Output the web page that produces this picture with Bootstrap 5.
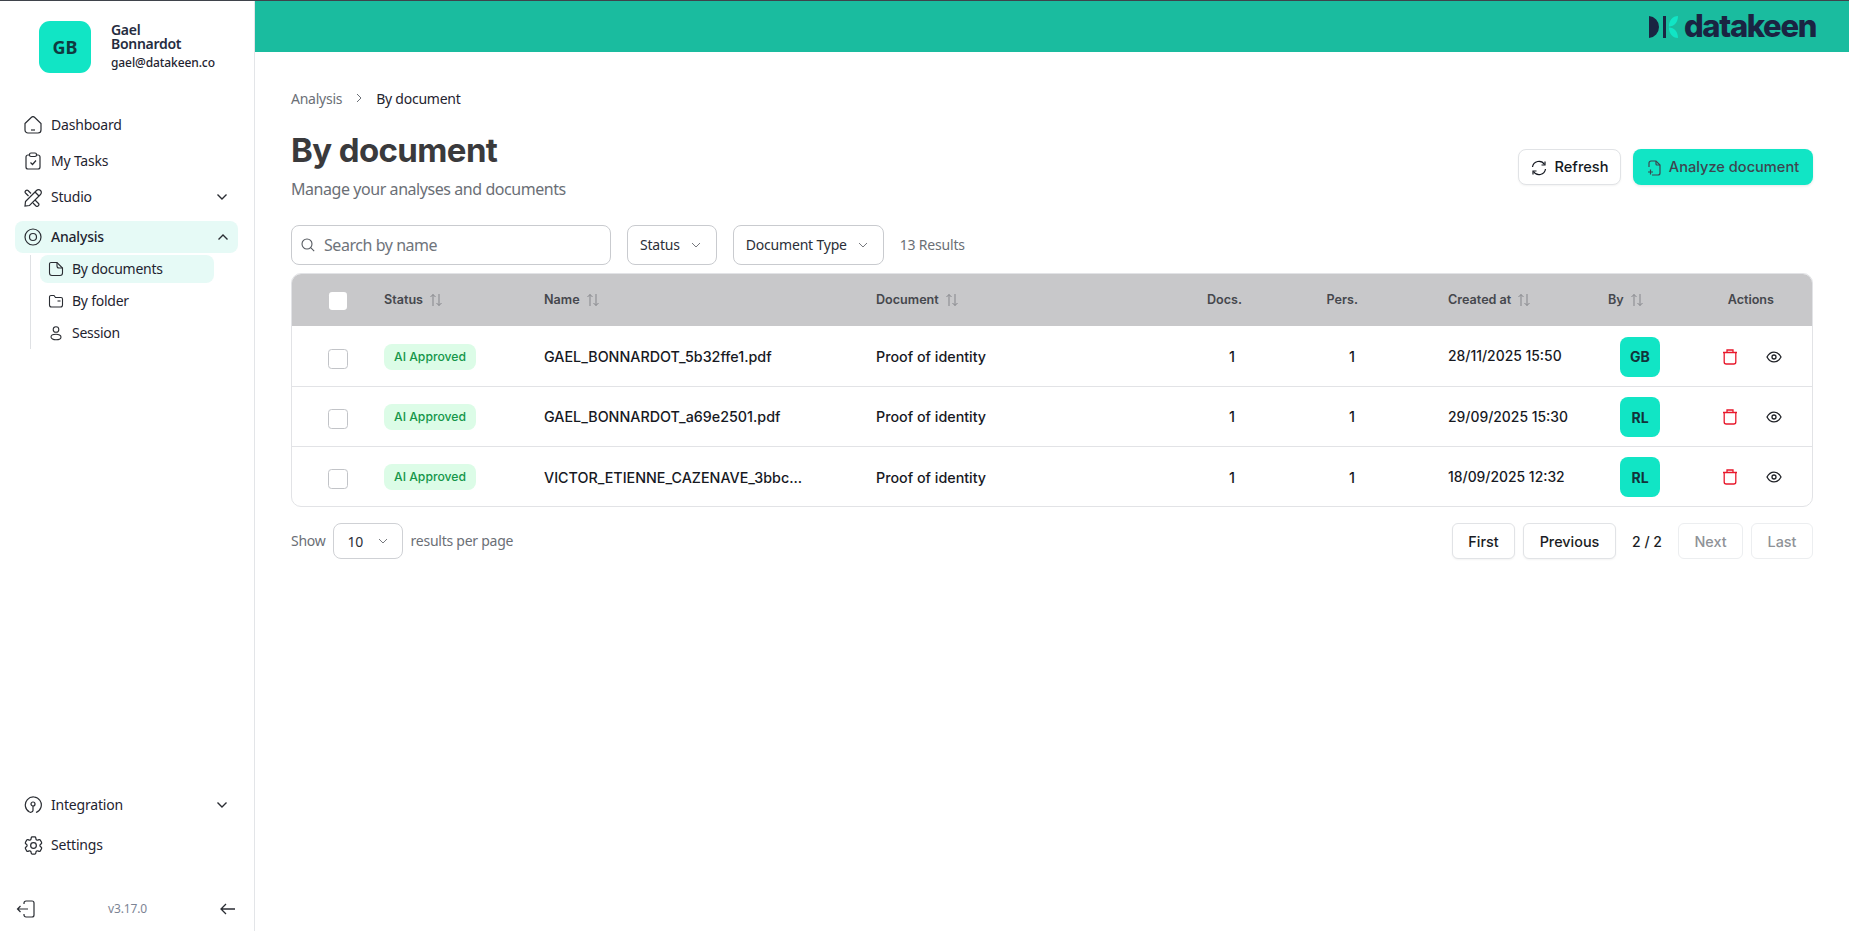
<!DOCTYPE html>
<html lang="en">
<head>
<meta charset="utf-8">
<title>By document</title>
<link rel="stylesheet" href="https://cdn.jsdelivr.net/npm/bootstrap@5.3.0/dist/css/bootstrap.min.css">
<style>
:root{--mint:#11e5c5;--ink:#1d2433;}
html,body{height:100%;overflow:hidden;}
body{border-top:1px solid #3f434b;background:#fff;font-family:"Noto Sans","Liberation Sans",sans-serif;font-size:14px;color:#1f2430;}
.shell{height:930px;}
.side{width:255px;flex:none;border-right:1px solid #e3e5e8;}
.who{padding:20px 0 0 39px;height:106px;}
.ava{width:52px;height:52px;border-radius:11px;background:var(--mint);color:#0f3a40;font-weight:700;font-size:18px;}
.who-txt{margin:-2px 0 0 20px;padding-top:4px;}
.who-name{font-weight:600;font-size:14px;line-height:14px;color:#252c40;letter-spacing:-.3px;}
.who-mail{font-size:12px;font-weight:500;line-height:14px;margin-top:5px;letter-spacing:-.1px;}
.menu-row{height:36px;padding:0 26px 0 24px;margin:0;gap:9px;font-size:14px;letter-spacing:-.2px;color:#1f2430;text-decoration:none;}
.menu-row svg.ico{flex:none;}
.menu-row svg.ico-w{margin-right:-1px;}
.menu-row .chev{margin-left:auto;}
.lbl{margin-top:-2px;}
.menu-on{height:32px;margin:6px 16px 0 15px;padding:0 9px;background:#e6faf6;border-radius:8px;font-weight:500;}
.sublist{margin:2px 0 0 30px;border-left:1px solid #dfe1e4;padding:0 0 0 9px;height:94px;width:185px;}
.sub-row{height:28px;padding:0 0 0 8px;margin-bottom:4px;gap:8px;font-size:14px;letter-spacing:-.25px;color:#1f2430;border-radius:8px;}
.sub-on{background:#e6faf6;width:174px;}
.foot{height:44px;padding:0 18px 0 16px;margin-top:24px;}
.ver{font-size:12px;color:#7c8494;letter-spacing:-.15px;}
.top{height:51px;background:#1abc9f;padding-right:33px;}
.brand{font-family:Inter,sans-serif;font-weight:800;font-size:31px;line-height:1;color:#1a2442;letter-spacing:-1.35px;margin-left:6px;margin-top:-3px;}
.pane{padding:0 36px;}
.crumbs{margin:37px 0 0;height:18px;align-items:center;font-size:14px;letter-spacing:-.25px;}
.crumbs .was{color:#6b6f76;}
.crumbs .now{color:#1f2430;}
.crumbs .sep{margin:0 14px 0 14px;}
.ttl{font-family:Inter,sans-serif;font-weight:700;font-size:33px;line-height:40px;color:#3a3a3c;letter-spacing:-.6px;margin:0;}
.subttl{font-size:16px;line-height:22px;color:#6b6f76;margin:8px 0 0;letter-spacing:-.44px;}
.heading{margin-top:23px;}
.act{height:36px;border-radius:8px;font-family:Inter,sans-serif;font-size:14.6px;font-weight:500;padding:1px 0 0;gap:8px;}
.act-ref{width:103px;background:#fff;border:1px solid #e1e3e6;color:#141821;box-shadow:0 1px 2px rgba(0,0,0,.05);}
.act-ana{width:180px;background:var(--mint);border:0;color:#3e4550;box-shadow:0 1px 3px rgba(0,0,0,.1);}
.act-ana:hover{background:var(--mint);color:#3e4550;}
.tools{margin-top:25px;height:40px;gap:16px;}
.finder{width:320px;height:40px;border:1px solid #c9cbcf;border-radius:8px;padding-left:9px;gap:9px;}
.finder input{border:0;outline:0;padding:0;font-size:16px;letter-spacing:-.45px;box-shadow:none;color:#333;}
.finder input::placeholder{color:#6f747b;opacity:1;}
.pick{height:40px;border:1px solid #c9cbcf;border-radius:8px;background:#fff;padding:0 15px 0 12px;gap:11px;font-size:14px;letter-spacing:-.2px;color:#2b2f38;}
.count{color:#6b6f76;font-size:14px;letter-spacing:-.2px;}
.tbl-wrap{margin-top:8px;width:1522px;border:1px solid #e2e3e6;border-radius:10px;overflow:hidden;}
.grid-t{table-layout:fixed;width:1520px;margin:0;font-family:Inter,sans-serif;}
.grid-t th{height:52px;background:#c8c8ca;color:#45474d;font-size:12.6px;font-weight:600;border:0;padding:0 0 0 12px;vertical-align:middle;}
.grid-t td{height:60px;padding:2px 0 0 12px;font-size:14.3px;font-weight:500;color:#17191f;border-bottom:1px solid #e2e3e6;vertical-align:middle;white-space:nowrap;}
.grid-t tr:last-child td{border-bottom:0;}
.grid-t .sort{margin-left:6px;vertical-align:-3px;}
.grid-t td.stamp{font-size:13.9px;}
.boxcell{padding-left:36px !important;}
.tick{width:20px;height:20px;margin:4px 0 0;border:1px solid #c2c4c8;border-radius:4px;}
.tick-h{width:18px;height:18px;border:0;margin:2px 0 0 1px;}
.pill{display:inline-block;height:26px;line-height:26px;width:92px;text-align:center;border-radius:8px;background:#dcfce7;color:#15964a;font-size:12.2px;font-weight:500;}
.who-sq{width:40px;height:40px;border-radius:8px;background:var(--mint);color:#12333a;font-size:14px;font-weight:700;margin-left:12px;}
.num-d{text-align:right;padding-right:55px !important;}
.th-d{text-align:right;padding-right:48px !important;}
.num-p{text-align:right;padding-right:81px !important;}
.th-p{text-align:right;padding-right:78px !important;}
.th-a{padding:0 38px 0 0 !important;text-align:right;}
.acts{padding-right:30px;}
.acts svg{flex:none;}
.pg{margin-top:16px;height:36px;}
.pg-l{gap:7px;color:#6b6f76;letter-spacing:-.25px;}
.sizer{width:70px;height:36px;border:1px solid #cfd1d5;border-radius:8px;padding:0 14px;color:#2b2f38;font-size:14px;background:#fff;}
.pg-l .after{margin-left:1px;}
.pg-b{height:36px;padding:1px 0 0;border:1px solid #e1e3e6;border-radius:6px;background:#fff;color:#1a1d24;font-family:Inter,sans-serif;font-weight:500;font-size:14.4px;box-shadow:0 1px 2px rgba(0,0,0,.05);}
.pg-b:disabled{color:#8f9297;border-color:#eceef0;opacity:1;background:#fff;box-shadow:none;}
.pg-n{font-family:Inter,sans-serif;font-size:14px;font-weight:500;color:#1a1d24;width:54px;text-align:center;}
</style>
</head>
<body>
<div class="shell d-flex">
  <aside class="side d-flex flex-column">
    <div class="who d-flex">
      <div class="ava d-flex align-items-center justify-content-center">GB</div>
      <div class="who-txt">
        <div class="who-name">Gael<br>Bonnardot</div>
        <div class="who-mail">gael@datakeen.co</div>
      </div>
    </div>
    <a class="menu-row d-flex align-items-center"><svg class="ico" width="18" height="18" viewBox="0 0 18 18" fill="none" stroke="#2a2d33" stroke-width="1.2"><path d="M1 7.500 7.500 1.300a2.200 2.200 0 0 1 3 0L17 7.500V14a3 3 0 0 1-3 3H4a3 3 0 0 1-3-3Z"/><path d="M7 14h4"/></svg><span class="lbl">Dashboard</span></a>
    <a class="menu-row d-flex align-items-center"><svg class="ico" width="18" height="18" viewBox="0 0 18 18" fill="none" stroke="#2a2d33" stroke-width="1.2"><path d="M5.500 3H4a2 2 0 0 0-2 2v10a2 2 0 0 0 2 2h10a2 2 0 0 0 2-2V5a2 2 0 0 0-2-2h-1.500"/><rect x="5.500" y="1" width="7" height="3.500" rx="1.500"/><path d="m6.500 10.500 2 2 3.500-4"/></svg><span class="lbl">My Tasks</span></a>
    <a class="menu-row d-flex align-items-center"><svg class="ico ico-w" width="19" height="19" viewBox="0 0 19 19" fill="none" stroke="#2a2d33" stroke-width="1.2"><path d="M1.500 13.500 12.500 2.500a2.800 2.800 0 0 1 4 4l-11 11-4.500.500Z"/><path d="m11 4 4 4"/><path d="M7 5.500 4 2.500a1.500 1.500 0 0 0-2 0L1.500 3a1.500 1.500 0 0 0 0 2l3 3M11 12l3.500 3.500a1.500 1.500 0 0 1 0 2l-.5.500a1.500 1.500 0 0 1-2 0L9 15"/></svg><span class="lbl">Studio</span><svg class="chev" width="12" height="8" viewBox="0 0 12 8" fill="none" stroke="#2a2d33" stroke-width="1.400"><path d="m1.500 1.500 4.500 4.500 4.500-4.500"/></svg></a>
    <a class="menu-row menu-on d-flex align-items-center"><svg class="ico" width="18" height="18" viewBox="0 0 18 18" fill="none" stroke="#2a2d33" stroke-width="1.200"><circle cx="9" cy="9" r="8"/><circle cx="9" cy="9" r="3.500"/></svg><span class="lbl">Analysis</span><svg class="chev" width="12" height="8" viewBox="0 0 12 8" fill="none" stroke="#2a2d33" stroke-width="1.400"><path d="m1.500 6.500 4.500-4.500 4.500 4.500"/></svg></a>
    <div class="sublist">
      <div class="sub-row sub-on d-flex align-items-center"><svg width="16" height="16" viewBox="0 0 16 16" fill="none" stroke="#2a2d33" stroke-width="1.100"><path d="M3 1.500h6l5.500 5.500v5a2.500 2.500 0 0 1-2.500 2.500H4A2.500 2.500 0 0 1 1.500 12V3A1.500 1.500 0 0 1 3 1.500Z"/><path d="M9 1.500V5a2 2 0 0 0 2 2h3.500"/></svg><span class="lbl">By documents</span></div>
      <div class="sub-row d-flex align-items-center"><svg width="16" height="16" viewBox="0 0 16 16" fill="none" stroke="#2a2d33" stroke-width="1.100"><path d="M1.500 4A1.500 1.500 0 0 1 3 2.500h3l1.500 2h5.500a1.500 1.500 0 0 1 1.500 1.500v6a2 2 0 0 1-2 2H3.500a2 2 0 0 1-2-2Z"/><path d="M9.500 8h3"/></svg><span class="lbl">By folder</span></div>
      <div class="sub-row d-flex align-items-center"><svg width="16" height="16" viewBox="0 0 16 16" fill="none" stroke="#2a2d33" stroke-width="1.100"><circle cx="8" cy="4.500" r="2.800"/><ellipse cx="8" cy="12" rx="5" ry="2.800"/></svg><span class="lbl">Session</span></div>
    </div>
    <div class="mt-auto">
      <a class="menu-row d-flex align-items-center"><svg class="ico" width="18" height="18" viewBox="0 0 18 18" fill="none" stroke="#2a2d33" stroke-width="1.200"><path d="M5.500 16A8 8 0 1 1 12 16.500"/><circle cx="9" cy="8" r="2"/><path d="M9 10v4.500a2.500 2.500 0 0 1-3.500 1.500"/></svg><span class="lbl">Integration</span><svg class="chev" width="12" height="8" viewBox="0 0 12 8" fill="none" stroke="#2a2d33" stroke-width="1.400"><path d="m1.500 1.500 4.500 4.500 4.500-4.500"/></svg></a>
      <a class="menu-row d-flex align-items-center" style="margin-top:4px"><svg class="ico ico-w" width="19" height="19" viewBox="2 2 20 20" fill="none" stroke="#2a2d33" stroke-width="1.300"><path d="M9.594 3.940c.09-.542.56-.94 1.110-.94h2.593c.55 0 1.020.398 1.110.94l.213 1.281c.063.374.313.686.645.870.074.040.147.083.22.127.325.196.72.257 1.075.124l1.217-.456a1.125 1.125 0 0 1 1.370.490l1.296 2.247a1.125 1.125 0 0 1-.26 1.431l-1.003.827c-.293.241-.438.613-.43.992a7.723 7.723 0 0 1 0 .255c-.008.378.137.75.43.991l1.004.827c.424.35.534.955.26 1.430l-1.298 2.247a1.125 1.125 0 0 1-1.369.491l-1.217-.456c-.355-.133-.75-.072-1.076.124a6.470 6.470 0 0 1-.22.128c-.331.183-.581.495-.644.869l-.213 1.281c-.09.543-.56.94-1.110.94h-2.594c-.55 0-1.019-.398-1.110-.94l-.213-1.281c-.062-.374-.312-.686-.644-.87a6.520 6.520 0 0 1-.22-.127c-.325-.196-.72-.257-1.076-.124l-1.217.456a1.125 1.125 0 0 1-1.369-.49l-1.297-2.247a1.125 1.125 0 0 1 .26-1.431l1.004-.827c.292-.24.437-.613.43-.991a6.932 6.932 0 0 1 0-.255c.007-.38-.138-.751-.43-.992l-1.004-.827a1.125 1.125 0 0 1-.26-1.430l1.297-2.247a1.125 1.125 0 0 1 1.370-.491l1.216.456c.356.133.751.072 1.076-.124.072-.044.146-.086.22-.128.332-.183.582-.495.644-.869l.214-1.280Z"/><circle cx="12" cy="12" r="3"/></svg><span class="lbl">Settings</span></a>
      <div class="foot d-flex align-items-center justify-content-between">
        <svg width="19" height="18" viewBox="0 0 19 18" fill="none" stroke="#2a2d33" stroke-width="1.200"><path d="M8 4V3a2 2 0 0 1 2-2h6a2 2 0 0 1 2 2v12a2 2 0 0 1-2 2h-6a2 2 0 0 1-2-2v-1"/><path d="M12 9H1.500m3-3-3 3 3 3"/></svg>
        <span class="ver">v3.17.0</span>
        <svg width="16" height="12" viewBox="0 0 16 12" fill="none" stroke="#2a2d33" stroke-width="1.300"><path d="M15 6H1.500m4.500-5L1 6l5 5"/></svg>
      </div>
    </div>
  </aside>
  <div class="flex-grow-1 d-flex flex-column" style="min-width:0">
    <header class="top d-flex align-items-center justify-content-end">
      <svg width="29" height="22" viewBox="0 0 29 22" aria-hidden="true"><path d="M0 0a11 11 0 0 1 10 11 11 11 0 0 1-10 11Z" fill="#1a2442"/><rect x="14" y="0" width="3" height="22" fill="#1a2442"/><path d="M20 10.500C20 4.500 23.500 0 29 0 29 6 25.500 10.500 20 10.500Z M20 11.500C25.500 11.500 29 16 29 22 23.500 22 20 17.500 20 11.500Z" fill="#11e5c5"/></svg>
      <span class="brand">datakeen</span>
    </header>
    <main class="pane flex-grow-1">
      <nav class="crumbs d-flex"><span class="was">Analysis</span><svg class="sep" width="6" height="10" viewBox="0 0 6 10" fill="none" stroke="#6b6f76" stroke-width="1"><path d="m1 1 4 4-4 4"/></svg><span class="now">By document</span></nav>
      <div class="heading d-flex justify-content-between align-items-center">
        <div>
          <h1 class="ttl">By document</h1>
          <p class="subttl">Manage your analyses and documents</p>
        </div>
        <div class="d-flex gap-2" style="margin:4px 0 0">
          <button class="btn act act-ref d-flex align-items-center justify-content-center me-1" type="button"><svg width="16" height="16" viewBox="0 0 16 16" fill="none" stroke="#141821" stroke-width="1.200"><path d="M1.500 7a6.500 6.500 0 0 1 12-2.500M14.500 9a6.500 6.500 0 0 1-12 2.500"/><path d="M14 1.500V5h-3.500M2 14.500V11h3.500"/></svg>Refresh</button>
          <button class="btn act act-ana d-flex align-items-center justify-content-center" type="button"><svg width="14" height="16" viewBox="0 0 14 16" fill="none" stroke="#3e4550" stroke-width="1.200"><path d="M2 7V3a2 2 0 0 1 2-2h5l4 4v8a2 2 0 0 1-2 2H5"/><path d="M9 1v3a1 1 0 0 0 1 1h3"/><path d="M1 12h5M3.500 9.500v5"/></svg>Analyze document</button>
        </div>
      </div>
      <div class="tools d-flex align-items-center">
        <label class="finder d-flex align-items-center"><svg width="14" height="14" viewBox="0 0 14 14" fill="none" stroke="#55595f" stroke-width="1.100" class="flex-shrink-0"><circle cx="6" cy="6" r="5"/><path d="m9.700 9.700 3.500 3.500"/></svg><input class="form-control" type="text" placeholder="Search by name"></label>
        <button class="pick d-flex align-items-center" type="button"><span class="lbl">Status</span><svg width="10" height="6" viewBox="0 0 10 6" fill="none" stroke="#77797e" stroke-width="1"><path d="m1 1 4 4 4-4"/></svg></button>
        <button class="pick d-flex align-items-center" type="button"><span class="lbl">Document Type</span><svg width="10" height="6" viewBox="0 0 10 6" fill="none" stroke="#77797e" stroke-width="1"><path d="m1 1 4 4 4-4"/></svg></button>
        <span class="count lbl">13 Results</span>
      </div>
      <div class="tbl-wrap">
        <table class="table grid-t">
          <colgroup><col style="width:80px"><col style="width:160px"><col style="width:332px"><col style="width:288px"><col style="width:138px"><col style="width:146px"><col style="width:160px"><col style="width:94px"><col style="width:122px"></colgroup>
          <thead><tr>
            <th class="boxcell"><input class="form-check-input tick tick-h" type="checkbox" aria-label="Select all"></th>
            <th>Status<svg class="sort" width="14" height="14" viewBox="0 0 14 14" fill="none" stroke="#85868b" stroke-width="1"><path d="M4 13V1.500M1.500 4 4 1.500 6.500 4M10 1v11.500M7.500 10l2.500 2.500 2.500-2.500"/></svg></th>
            <th>Name<svg class="sort" width="14" height="14" viewBox="0 0 14 14" fill="none" stroke="#85868b" stroke-width="1"><path d="M4 13V1.500M1.500 4 4 1.500 6.500 4M10 1v11.500M7.500 10l2.500 2.500 2.500-2.500"/></svg></th>
            <th>Document<svg class="sort" width="14" height="14" viewBox="0 0 14 14" fill="none" stroke="#85868b" stroke-width="1"><path d="M4 13V1.500M1.500 4 4 1.500 6.500 4M10 1v11.500M7.500 10l2.500 2.500 2.500-2.500"/></svg></th>
            <th class="th-d">Docs.</th>
            <th class="th-p">Pers.</th>
            <th>Created at<svg class="sort" width="14" height="14" viewBox="0 0 14 14" fill="none" stroke="#85868b" stroke-width="1"><path d="M4 13V1.500M1.500 4 4 1.500 6.500 4M10 1v11.500M7.500 10l2.500 2.500 2.500-2.500"/></svg></th>
            <th>By<svg class="sort" width="14" height="14" viewBox="0 0 14 14" fill="none" stroke="#85868b" stroke-width="1"><path d="M4 13V1.500M1.500 4 4 1.500 6.500 4M10 1v11.500M7.500 10l2.500 2.500 2.500-2.500"/></svg></th>
            <th class="th-a">Actions</th>
          </tr></thead>
          <tbody>
            <tr>
              <td class="boxcell"><input class="form-check-input tick" type="checkbox" aria-label="Select row"></td>
              <td><span class="pill">AI Approved</span></td>
              <td>GAEL_BONNARDOT_5b32ffe1.pdf</td>
              <td>Proof of identity</td>
              <td class="num-d">1</td>
              <td class="num-p">1</td>
              <td class="stamp">28/11/2025 15:50</td>
              <td><div class="who-sq d-flex align-items-center justify-content-center">GB</div></td>
              <td><div class="acts d-flex align-items-center justify-content-end"><svg width="14" height="16" viewBox="0 0 14 16" fill="none" stroke="#e8192c" stroke-width="1.300"><path d="M0 3.500h14M1.200 3.500V13a2 2 0 0 0 2 2h7.600a2 2 0 0 0 2-2V3.500M4 3.500V1h6v2.500"/></svg><svg style="margin-left:29px" width="16" height="12" viewBox="0 0 16 12" fill="none" stroke="#1f2126" stroke-width="1.300"><path d="M1 6c3.500-6.500 10.500-6.500 14 0-3.500 6.500-10.500 6.500-14 0Z"/><circle cx="8" cy="6" r="2"/></svg></div></td>
            </tr>
            <tr>
              <td class="boxcell"><input class="form-check-input tick" type="checkbox" aria-label="Select row"></td>
              <td><span class="pill">AI Approved</span></td>
              <td>GAEL_BONNARDOT_a69e2501.pdf</td>
              <td>Proof of identity</td>
              <td class="num-d">1</td>
              <td class="num-p">1</td>
              <td class="stamp">29/09/2025 15:30</td>
              <td><div class="who-sq d-flex align-items-center justify-content-center">RL</div></td>
              <td><div class="acts d-flex align-items-center justify-content-end"><svg width="14" height="16" viewBox="0 0 14 16" fill="none" stroke="#e8192c" stroke-width="1.300"><path d="M0 3.500h14M1.200 3.500V13a2 2 0 0 0 2 2h7.600a2 2 0 0 0 2-2V3.500M4 3.500V1h6v2.500"/></svg><svg style="margin-left:29px" width="16" height="12" viewBox="0 0 16 12" fill="none" stroke="#1f2126" stroke-width="1.300"><path d="M1 6c3.500-6.500 10.500-6.500 14 0-3.500 6.500-10.500 6.500-14 0Z"/><circle cx="8" cy="6" r="2"/></svg></div></td>
            </tr>
            <tr>
              <td class="boxcell"><input class="form-check-input tick" type="checkbox" aria-label="Select row"></td>
              <td><span class="pill">AI Approved</span></td>
              <td>VICTOR_ETIENNE_CAZENAVE_3bbc...</td>
              <td>Proof of identity</td>
              <td class="num-d">1</td>
              <td class="num-p">1</td>
              <td class="stamp">18/09/2025 12:32</td>
              <td><div class="who-sq d-flex align-items-center justify-content-center">RL</div></td>
              <td><div class="acts d-flex align-items-center justify-content-end"><svg width="14" height="16" viewBox="0 0 14 16" fill="none" stroke="#e8192c" stroke-width="1.300"><path d="M0 3.500h14M1.200 3.500V13a2 2 0 0 0 2 2h7.600a2 2 0 0 0 2-2V3.500M4 3.500V1h6v2.500"/></svg><svg style="margin-left:29px" width="16" height="12" viewBox="0 0 16 12" fill="none" stroke="#1f2126" stroke-width="1.300"><path d="M1 6c3.500-6.500 10.500-6.500 14 0-3.500 6.500-10.500 6.500-14 0Z"/><circle cx="8" cy="6" r="2"/></svg></div></td>
            </tr>
          </tbody>
        </table>
      </div>
      <div class="pg d-flex justify-content-between align-items-center">
        <div class="pg-l d-flex align-items-center"><span class="lbl">Show</span><div class="sizer d-flex align-items-center justify-content-between">10<svg width="10" height="6" viewBox="0 0 10 6" fill="none" stroke="#77797e" stroke-width="1"><path d="m1 1 4 4 4-4"/></svg></div><span class="lbl after">results per page</span></div>
        <div class="d-flex align-items-center">
          <button class="pg-b" style="width:63px" type="button">First</button>
          <button class="pg-b ms-2" style="width:93px" type="button">Previous</button>
          <span class="pg-n ms-1 me-1">2 / 2</span>
          <button class="pg-b" style="width:65px" disabled type="button">Next</button>
          <button class="pg-b ms-2" style="width:62px" disabled type="button">Last</button>
        </div>
      </div>
    </main>
  </div>
</div>
<script src="https://cdn.jsdelivr.net/npm/bootstrap@5.3.0/dist/js/bootstrap.bundle.min.js"></script>
</body>
</html>
